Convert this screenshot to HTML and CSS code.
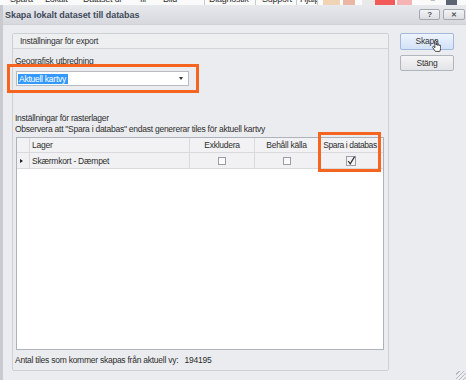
FILE: index.html
```html
<!DOCTYPE html>
<html lang="sv">
<head>
    <meta charset="UTF-8">
    <meta name="viewport" content="width=device-width, initial-scale=1.0">
    <title>Skapa lokalt dataset till databas</title>
    <link rel="stylesheet" href="styles.css">
</head>
<body>
    <!-- Main window menu, mostly hidden behind the dialog -->
    <div class="menubar">
        <span class="menu-item m-spara">Spara</span>
        <span class="menu-item m-lokalt">Lokalt</span>
        <span class="menu-item m-dataset">Dataset ur</span>
        <span class="menu-item m-fil">fil</span>
        <span class="menu-item m-bild sep">Bild</span>
        <span class="menu-item m-diag sep">Diagnostik</span>
        <span class="menu-item m-support sep">Support</span>
        <span class="menu-item m-hjalp sep">Hjälp</span>
        <span class="swatch sw-white w5"></span>
        <span class="swatch sw-peach w17"></span>
        <span class="swatch sw-white w3"></span>
        <span class="swatch sw-salmon w12"></span>
        <span class="swatch sw-white w7"></span>
        <span class="swatch sw-grey w13"></span>
        <span class="swatch sw-red w20"></span>
        <span class="swatch sw-white w2"></span>
        <span class="swatch sw-pink w15"></span>
        <span class="swatch sw-white w8"></span>
        <span class="win-min">–</span>
        <span class="win-icon"></span>
    </div>

    <div class="window">
        <div class="titlebar">
            <span class="title">Skapa lokalt dataset till databas</span>
            <div class="caption-btns">
                <span class="cap-btn cap-help">?</span>
                <span class="cap-btn cap-close">✕</span>
            </div>
        </div>

        <div class="dialog">
            <div class="group">
                <div class="group-header">Inställningar för export</div>
                <div class="group-body">
                    <div class="label label-geo">Geografisk utbredning</div>
                    <div class="combo">
                        <span class="combo-text">Aktuell kartvy</span>
                        <span class="combo-arrow"></span>
                    </div>

                    <div class="label label-raster">Inställningar för rasterlager</div>
                    <div class="label">Observera att "Spara i databas" endast genererar tiles för aktuell kartvy</div>

                    <!-- Layer grid -->
                    <div class="grid">
                        <div class="grid-row grid-head">
                            <span class="cell cell-rowhead"></span>
                            <span class="cell cell-name">Lager</span>
                            <span class="cell">Exkludera</span>
                            <span class="cell">Behåll källa</span>
                            <span class="cell cell-last cell-tight">Spara i databas</span>
                        </div>
                        <div class="grid-row grid-data">
                            <span class="cell cell-rowhead"><span class="row-marker"></span></span>
                            <span class="cell cell-name">Skærmkort - Dæmpet</span>
                            <span class="cell"><span class="checkbox"></span></span>
                            <span class="cell"><span class="checkbox"></span></span>
                            <span class="cell cell-last">
                                <svg class="checkbox-on" width="10" height="10" viewBox="0 0 10 10">
                                    <rect x="0.5" y="0.5" width="9" height="9" fill="#f4f4f4" stroke="#9a9da3"/>
                                    <path d="M2.2 5 L4.2 7.8 L8.6 0.6" fill="none" stroke="#333" stroke-width="1.2"/>
                                </svg>
                            </span>
                        </div>
                        <div class="grid-empty"></div>
                    </div>

                    <div class="label label-count">Antal tiles som kommer skapas från aktuell vy:&nbsp;&nbsp;&nbsp;194195</div>
                </div>

                <!-- Orange annotation frames -->
                <div class="mark mark-combo"></div>
                <div class="mark mark-column"></div>
            </div>

            <div class="side">
                <span class="btn btn-hot">Skapa
                    <svg class="cursor" width="9" height="13" viewBox="0 0 12 17">
                        <path d="M3.5 1.5 a1 1 0 0 1 2 0 v5 a1 1 0 0 1 2 0 v0.5 a1 1 0 0 1 2 0 v0.5 a1 1 0 0 1 2 0 v4 l-1 3.5 h-6 l-3.5 -5 a1 1 0 0 1 1.6 -1.2 l1.4 1.4 z" fill="#fff" stroke="#000" stroke-width="0.9"/>
                    </svg>
                </span>
                <span class="btn">Stäng</span>
            </div>

            <div class="grip"></div>
        </div>
    </div>
</body>
</html>
```

FILE: styles.css
```css
body {
    margin: 0;
    width: 466px;
    height: 380px;
    overflow: hidden;
    font-family: "Liberation Sans", Arial, sans-serif;
    font-size: 8.5px;
    letter-spacing: -0.25px;
    color: #2e2e2e;
    background-color: #ebecef;
}

/* Background window menu strip */
.menubar {
    height: 5px;
    display: flex;
    overflow: hidden;
    background-color: #fafafa;
}

.menu-item {
    box-sizing: border-box;
    font-size: 9px;
    line-height: 9px;
    margin-top: -5px;
    color: #333;
    white-space: nowrap;
    overflow: hidden;
}

.menu-item.sep {
    border-right: 1px solid #c9c9c9;
}

.m-spara { width: 40px; padding-left: 10px; }
.m-lokalt { width: 40px; padding-left: 5px; }
.m-dataset { width: 53px; padding-left: 3px; }
.m-fil { width: 27px; padding-left: 7px; }
.m-bild { width: 45px; padding-left: 3px; }
.m-diag { width: 51px; padding-left: 4px; }
.m-support { width: 41px; padding-left: 6px; }
.m-hjalp { width: 21px; padding-left: 3px; }

.swatch { height: 5px; }
.w2 { width: 2px; }
.w3 { width: 3px; }
.w5 { width: 5px; }
.w7 { width: 7px; }
.w8 { width: 8px; }
.w12 { width: 12px; }
.w13 { width: 13px; }
.w15 { width: 15px; }
.w17 { width: 17px; }
.w20 { width: 20px; }
.sw-white { background-color: #fbfbfb; }
.sw-peach { background-color: #f1d4b5; }
.sw-salmon { background-color: #ebb6a4; }
.sw-grey { background-color: #e9e9e9; }
.sw-red { background-color: #f25b59; }
.sw-pink { background-color: #f6b3b3; }

.win-min {
    width: 25px;
    font-size: 8px;
    line-height: 8px;
    margin-top: -4px;
    text-align: center;
    color: #888;
}

.win-icon {
    width: 11px;
    height: 5px;
    margin-left: 1px;
    background-color: #5a6474;
}

/* Dialog window */
.window {
    height: 375px;
    border-left: 3px solid #c8cacf;
    display: flex;
    flex-direction: column;
}

.titlebar {
    height: 20px;
    flex-shrink: 0;
    display: flex;
    align-items: center;
    justify-content: space-between;
    padding-left: 2px;
    background: linear-gradient(#e8e9ed, #d6d8dd);
    border-bottom: 1px solid #d0d2d7;
    box-sizing: border-box;
}

.title {
    font-size: 9px;
    font-weight: bold;
    letter-spacing: -0.05px;
    color: #404b5b;
}

.caption-btns {
    display: flex;
    gap: 3px;
    padding-right: 1px;
    margin-top: -1px;
}

.cap-btn {
    height: 11px;
    box-sizing: border-box;
    border: 1px solid #a3a7ae;
    border-radius: 2px;
    background: linear-gradient(#f3f4f6, #dcdee2);
    color: #555;
    font-size: 8px;
    font-weight: bold;
    line-height: 9px;
    text-align: center;
}

.cap-help { width: 21px; }
.cap-close { width: 22px; font-size: 7px; }

.dialog {
    flex: 1;
    display: flex;
    padding: 8px 0 0 9px;
    position: relative;
}

.group {
    width: 377px;
    height: 338px;
    box-sizing: border-box;
    border: 1px solid #cdd0d4;
    border-radius: 2px;
    position: relative;
    display: flex;
    flex-direction: column;
}

.group-header {
    height: 15px;
    box-sizing: border-box;
    border-bottom: 1px solid #d3d5d9;
    background-color: #eeeff1;
    padding-left: 7px;
    line-height: 14px;
    color: #333;
}

.group-body {
    display: flex;
    flex-direction: column;
    padding-left: 2px;
}

.label {
    line-height: 11px;
    white-space: nowrap;
}

.label-geo {
    margin-top: 6px;
    line-height: 12px;
}

.combo {
    margin-top: 4px;
    margin-left: 1px;
    width: 173px;
    height: 15px;
    box-sizing: border-box;
    border: 1px solid #b7bbc2;
    background-color: #fff;
    display: flex;
    align-items: center;
    justify-content: space-between;
    padding: 0 5px 0 1px;
}

.combo-text {
    background-color: #3399ff;
    color: #fff;
    height: 10px;
    line-height: 10px;
    padding: 0 1px;
    width: 48px;
    white-space: nowrap;
}

.combo-arrow {
    width: 0;
    height: 0;
    border-left: 2.5px solid transparent;
    border-right: 2.5px solid transparent;
    border-top: 3px solid #333;
}

.label-raster {
    margin-top: 27px;
}

/* Layer grid */
.grid {
    margin-top: 2px;
    margin-left: 1px;
    width: 368px;
    height: 213px;
    box-sizing: border-box;
    border: 1px solid #aeb2ba;
    background-color: #fff;
    display: flex;
    flex-direction: column;
}

.grid-row {
    display: grid;
    grid-template-columns: 13px 160px 65px 64px 1fr;
    box-sizing: border-box;
    border-bottom: 1px solid #d8dadd;
}

.grid-head {
    height: 15px;
    background-color: #f2f2f4;
}

.grid-data {
    height: 16px;
    background-color: #f1f1f3;
}

.cell {
    border-right: 1px solid #d8dadd;
    display: flex;
    align-items: center;
    justify-content: center;
    white-space: nowrap;
}

.cell-name {
    justify-content: flex-start;
    padding-left: 2px;
}

.cell-last {
    border-right: none;
}

.cell-tight {
    letter-spacing: -0.4px;
    padding-right: 2px;
}

.row-marker {
    width: 0;
    height: 0;
    border-top: 2.5px solid transparent;
    border-bottom: 2.5px solid transparent;
    border-left: 3px solid #222;
    margin-right: 3px;
}

.checkbox {
    width: 8px;
    height: 8px;
    box-sizing: border-box;
    border: 1px solid #9a9da3;
    background: linear-gradient(#f6f6f6, #fff);
}

.checkbox-on {
    display: block;
}

.grid-empty {
    flex: 1;
}

.label-count {
    margin-top: 5px;
}

/* Orange annotation frames */
.mark {
    position: absolute;
    box-sizing: border-box;
    border: 3px solid #f5651f;
}

.mark-combo {
    left: -6px;
    top: 30px;
    width: 192px;
    height: 29px;
}

.mark-column {
    left: 305px;
    top: 98px;
    width: 63px;
    height: 40px;
}

/* Buttons */
.side {
    margin-left: 11px;
    display: flex;
    flex-direction: column;
    gap: 5px;
}

.btn {
    width: 54px;
    height: 16px;
    box-sizing: border-box;
    border: 1px solid #b2b5bb;
    border-radius: 2px;
    background: linear-gradient(#f5f5f7, #e3e4e7);
    text-align: center;
    line-height: 14px;
    color: #333;
    position: relative;
}

.btn-hot {
    height: 17px;
    line-height: 15px;
    border-color: #a3b8da;
    background: linear-gradient(#eef4fe, #d3e1f8);
}

.cursor {
    position: absolute;
    left: 31px;
    top: 6px;
}

.grip {
    position: absolute;
    right: 0;
    bottom: 0;
    width: 10px;
    height: 9px;
    background: repeating-linear-gradient(135deg, transparent 0 2px, #b5b8be 2px 3px);
}
```
